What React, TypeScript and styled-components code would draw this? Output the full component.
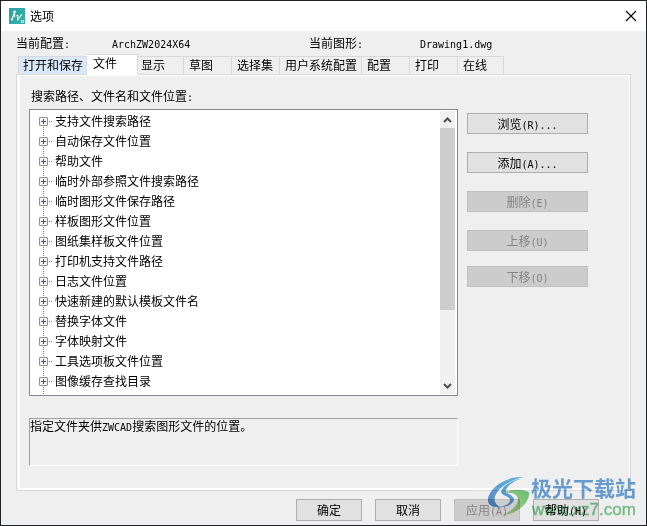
import React from "react";
import styled, { createGlobalStyle, css } from "styled-components";

const GlobalStyle = createGlobalStyle`
  * { box-sizing: border-box; }
  body {
    margin: 0;
    background: #efefef;
    color: #000;
    font: 12px/16px "Noto Sans CJK SC", sans-serif;
  }
  button { font: inherit; color: inherit; }
`;

const Dialog = styled.div`
  position: relative;
  min-height: 100vh;
  display: flex;
  flex-direction: column;
  background: #efefef;
  border: 1px solid #202127;
`;

const TitleBar = styled.header`
  display: flex;
  align-items: center;
  gap: 5px;
  height: 30px;
  padding: 0 9px 0 8px;
  background: #fff;
`;

const Title = styled.h1`
  flex: 1;
  margin: 0;
  font-size: 12px;
  font-weight: 400;
`;

const CloseButton = styled.button`
  display: flex;
  align-items: center;
  justify-content: center;
  width: 12px;
  height: 12px;
  padding: 0;
  border: 0;
  background: none;
`;

const Latin = styled.span`
  font-family: "DejaVu Sans Mono", monospace;
  font-size: 10px;
  line-height: 10px;
`;

const Summary = styled.dl`
  display: grid;
  grid-template-columns: 96px 197px 111px 1fr;
  margin: 0;
  padding: 4px 15px 3px;
  dt, dd { margin: 0; height: 16px; white-space: nowrap; }
`;

const Body = styled.main`
  flex: 1;
  display: flex;
  flex-direction: column;
  padding: 0 15px;
`;

const TabList = styled.div`
  display: flex;
  align-items: flex-end;
  height: 21px;
  padding-left: 2px;
  margin-bottom: -1px;
`;

const Tab = styled.button<{ $width: number; $hot?: boolean }>`
  flex: 0 0 auto;
  width: ${(p) => p.$width}px;
  height: 19px;
  padding: 0 0 1px 5px;
  text-align: left;
  white-space: nowrap;
  border: 1px solid #d9d9d9;
  border-left-width: 0;
  background: ${(p) => (p.$hot ? "#d8e8f8" : "#efefef")};
  line-height: 16px;
  &:first-child { border-left-width: 1px; padding-left: 4px; }
  &[aria-selected="true"] {
    position: relative;
    height: 21px;
    margin-right: -2px;
    padding: 0 0 3px 6px;
    background: #fff;
    border-bottom-color: #fff;
  }
`;

const Panel = styled.section`
  flex: 1;
  display: flex;
  flex-direction: column;
  border: 1px solid #d9d9d9;
  box-shadow: inset 0 0 0 1px #fff, inset 3px 0 0 #fff, inset 0 -2px 0 #fff;
  padding: 13px 42px 24px 12px;
`;

const TreeLabel = styled.h2`
  height: 16px;
  margin: 0 0 5px 2px;
  font-size: 12px;
  font-weight: 400;
`;

const Columns = styled.div`
  display: flex;
  align-items: flex-start;
  gap: 9px;
`;

const Left = styled.div`
  flex: 1;
  min-width: 0;
`;

const TreeBox = styled.div`
  display: flex;
  justify-content: space-between;
  border: 1px solid #828790;
  padding: 1px 2px 1px 0;
  background: #fff;
`;

const Tree = styled.ul`
  flex: 1;
  margin: 0;
  padding: 0 0 3px 9px;
  list-style: none;
  background: repeating-linear-gradient(#808080 0 1px, transparent 1px 2px) 13px 12px / 1px 100% no-repeat;
`;

const TreeItem = styled.li`
  display: flex;
  align-items: center;
  height: 20px;
  white-space: nowrap;
`;

const Expander = styled.button`
  display: flex;
  width: 9px;
  height: 9px;
  padding: 0;
  border: 0;
  background: none;
`;

const Branch = styled.span`
  width: 4px;
  height: 1px;
  margin: 0 2px 0 1px;
  background: repeating-linear-gradient(90deg, #808080 0 1px, transparent 1px 2px);
`;

const ScrollBar = styled.div`
  display: flex;
  flex-direction: column;
  width: 15px;
  background: #f0f0f0;
`;

const ScrollButton = styled.button`
  display: flex;
  align-items: center;
  justify-content: center;
  height: 17px;
  padding: 0;
  border: 0;
  background: none;
`;

const Track = styled.div`
  flex: 1;
`;

const Thumb = styled.div`
  height: 73%;
  background: #cdcdcd;
`;

const Hint = styled.p`
  height: 48px;
  margin: 22px 0 0;
  border: 1px solid;
  border-color: #a0a0a0 #fff #fff #a0a0a0;
  line-height: 14px;
`;

const Actions = styled.div`
  display: flex;
  flex-direction: column;
  gap: 18px;
  width: 121px;
  padding-top: 4px;
`;

const MoveGroup = styled.div`
  display: flex;
  flex-direction: column;
  gap: 15px;
`;

const buttonFace = css`
  padding: 0;
  border: 1px solid #adadad;
  background: #e1e1e1;
  line-height: 16px;
  white-space: nowrap;
  &:disabled { color: #838383; background: #ccc; border-color: #bfbfbf; }
`;

const ActionButton = styled.button`
  ${buttonFace}
  height: 21px;
`;

const Footer = styled.footer`
  display: flex;
  justify-content: flex-end;
  gap: 13px;
  padding: 8px 47px 4px;
`;

const FooterButton = styled.button`
  ${buttonFace}
  width: 66px;
  height: 22px;
`;

const Watermark = styled.svg`
  position: absolute;
  right: 6px;
  bottom: 7px;
  pointer-events: none;
  mix-blend-mode: multiply;
`;

const tabs = [
  { name: "打开和保存", width: 69, hot: true },
  { name: "文件", width: 51, selected: true },
  { name: "显示", width: 48 },
  { name: "草图", width: 48 },
  { name: "选择集", width: 48 },
  { name: "用户系统配置", width: 82 },
  { name: "配置", width: 48 },
  { name: "打印", width: 48 },
  { name: "在线", width: 46 },
];

const paths = [
  "支持文件搜索路径",
  "自动保存文件位置",
  "帮助文件",
  "临时外部参照文件搜索路径",
  "临时图形文件保存路径",
  "样板图形文件位置",
  "图纸集样板文件位置",
  "打印机支持文件路径",
  "日志文件位置",
  "快速新建的默认模板文件名",
  "替换字体文件",
  "字体映射文件",
  "工具选项板文件位置",
  "图像缓存查找目录",
];

const AppIcon = () => (
  <svg width="16" height="16" viewBox="0 0 16 16" aria-hidden="true">
    <defs>
      <linearGradient id="tile" x1="0" y1="0" x2="1" y2="1">
        <stop offset="0" stopColor="#2aa3a0" />
        <stop offset="1" stopColor="#36b0a8" />
      </linearGradient>
    </defs>
    <rect width="16" height="16" fill="url(#tile)" />
    <path d="M3 11.5L5.6 4v5.2M7.3 7.6l1.5.2v4l4-5.6" fill="none" stroke="#fff" strokeWidth="1.1" />
    <circle cx="5.6" cy="3.8" r="1.3" fill="#fff" />
    <circle cx="3" cy="11.5" r="1.1" fill="#fff" />
    <rect x="12.5" y="12.5" width="2" height="2" fill="none" stroke="#b5e3df" />
  </svg>
);

const PlusBox = () => (
  <svg width="9" height="9" viewBox="0 0 9 9" aria-hidden="true">
    <rect x="0.5" y="0.5" width="8" height="8" rx="0.5" fill="#f5f5f5" stroke="#919191" />
    <path d="M2 4.5h5M4.5 2v5" stroke="#3355a0" />
  </svg>
);

const Chevron = ({ down }: { down?: boolean }) => (
  <svg width="9" height="8" viewBox="0 0 9 8" aria-hidden="true">
    <path d={down ? "M1 2l3.5 3.5L8 2" : "M1 6l3.5-3.5L8 6"} fill="none" stroke="#505050" strokeWidth="2" />
  </svg>
);

export default function App() {
  return (
    <>
      <GlobalStyle />
      <Dialog role="dialog" aria-labelledby="title">
        <TitleBar>
          <AppIcon />
          <Title id="title">选项</Title>
          <CloseButton aria-label="关闭">
            <svg width="12" height="12" viewBox="0 0 12 12">
              <path d="M1 1l10 10M11 1L1 11" stroke="#000" strokeWidth="1.1" />
            </svg>
          </CloseButton>
        </TitleBar>
        <Summary>
          <dt>当前配置<Latin>:</Latin></dt>
          <dd><Latin>ArchZW2024X64</Latin></dd>
          <dt>当前图形<Latin>:</Latin></dt>
          <dd><Latin>Drawing1.dwg</Latin></dd>
        </Summary>
        <Body>
          <TabList role="tablist">
            {tabs.map((t) => (
              <Tab key={t.name} role="tab" aria-selected={!!t.selected} $width={t.width} $hot={t.hot}>
                {t.name}
              </Tab>
            ))}
          </TabList>
          <Panel role="tabpanel">
            <TreeLabel id="tree-label">搜索路径、文件名和文件位置<Latin>:</Latin></TreeLabel>
            <Columns>
              <Left>
                <TreeBox>
                  <Tree role="tree" aria-labelledby="tree-label">
                    {paths.map((p) => (
                      <TreeItem key={p} role="treeitem" aria-expanded={false}>
                        <Expander aria-label={p}><PlusBox /></Expander>
                        <Branch />
                        {p}
                      </TreeItem>
                    ))}
                  </Tree>
                  <ScrollBar>
                    <ScrollButton aria-label="向上滚动"><Chevron /></ScrollButton>
                    <Track><Thumb /></Track>
                    <ScrollButton aria-label="向下滚动"><Chevron down /></ScrollButton>
                  </ScrollBar>
                </TreeBox>
                <Hint>指定文件夹供<Latin>ZWCAD</Latin>搜索图形文件的位置。</Hint>
              </Left>
              <Actions>
                <ActionButton>浏览<Latin>(R)...</Latin></ActionButton>
                <ActionButton>添加<Latin>(A)...</Latin></ActionButton>
                <ActionButton disabled>删除<Latin>(E)</Latin></ActionButton>
                <MoveGroup>
                  <ActionButton disabled>上移<Latin>(U)</Latin></ActionButton>
                  <ActionButton disabled>下移<Latin>(O)</Latin></ActionButton>
                </MoveGroup>
              </Actions>
            </Columns>
          </Panel>
        </Body>
        <Footer>
          <FooterButton>确定</FooterButton>
          <FooterButton>取消</FooterButton>
          <FooterButton disabled>应用<Latin>(A)</Latin></FooterButton>
          <FooterButton>帮助<Latin>(H)</Latin></FooterButton>
        </Footer>
        <Watermark width="152" height="52" viewBox="0 0 152 52">
          <defs>
            <linearGradient id="wing" x1="1" y1="0" x2="0" y2="1">
              <stop offset="0" stopColor="#62c6f0" />
              <stop offset="1" stopColor="#5f8fd0" />
            </linearGradient>
            <linearGradient id="leaf" x1="1" y1="0" x2="0" y2="1">
              <stop offset="0" stopColor="#6fca80" />
              <stop offset="1" stopColor="#c5dc8c" />
            </linearGradient>
          </defs>
          <path d="M35 11C20 10 3 20 0 32C-1 38 3 42 12 41C7 38 5 34 8 28C13 19 24 14 35 11z" fill="url(#wing)" />
          <path d="M34 12C24 14 14 20 13 26C14 30 22 30 22 34C22 38 16 41 10 41C18 42 26 38 26 33C25 29 18 28 18 25C18 20 26 15 34 12z" fill="url(#wing)" />
          <path d="M16 27C22 23 32 23 41 26C42 38 28 48 13 50C22 46 30 40 30 34C30 28 24 26 16 27z" fill="url(#leaf)" />
          <text x="43" y="30" fontFamily="Noto Sans CJK SC, sans-serif" fontWeight="700" fontSize="21" fill="#6ea6dc">极光下载站</text>
          <text x="44" y="49" fontFamily="Liberation Sans, sans-serif" fontSize="17" fill="#7dc98f" stroke="#7dc98f" strokeWidth="0.4">www.xz7.com</text>
        </Watermark>
      </Dialog>
    </>
  );
}
